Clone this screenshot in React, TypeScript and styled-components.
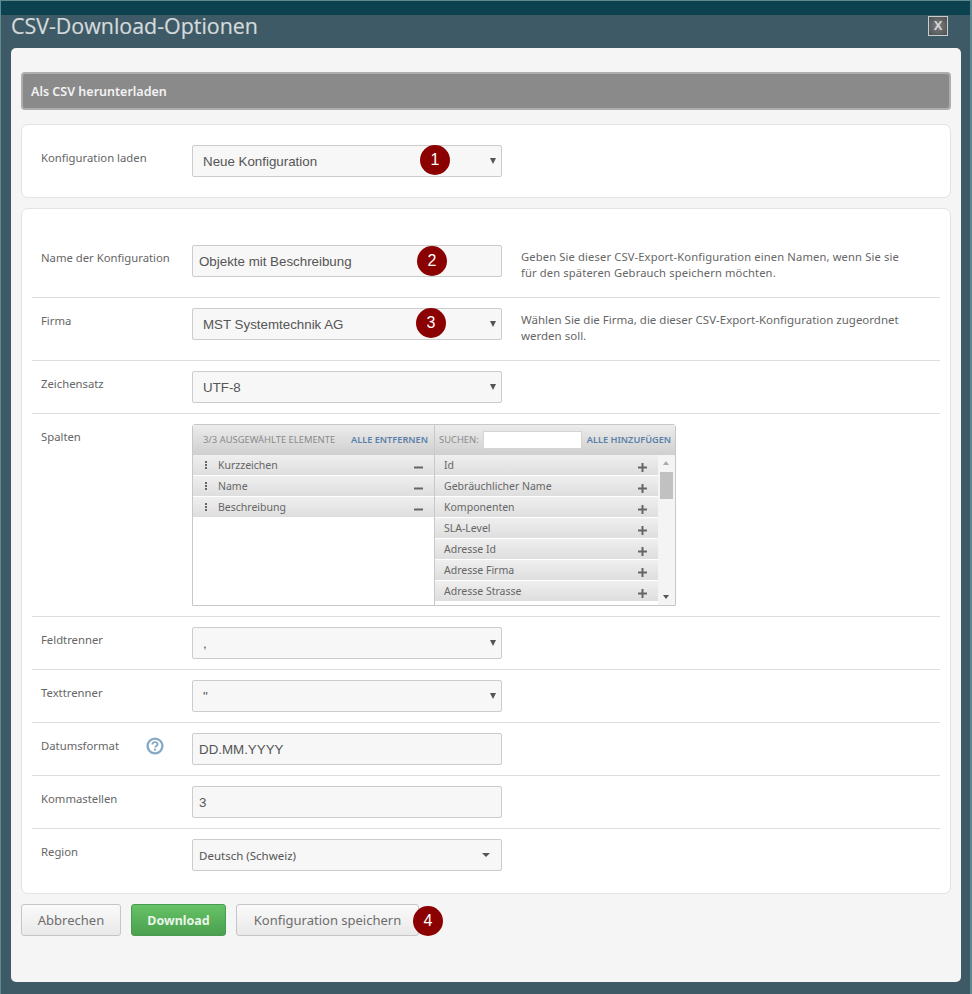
import styled, { createGlobalStyle } from "styled-components";
import { ReactNode } from "react";

const GlobalStyle = createGlobalStyle`
  html, body {
    margin: 0;
    padding: 0;
    background: #3f5a67;
  }
  * {
    box-sizing: border-box;
  }
`;

const Frame = styled.div`
  width: 972px;
  height: 994px;
  overflow: hidden;
  background: #3f5a67;
  border: 1px solid #5f8a90;
  border-bottom: 0;
  border-right-width: 2px;
`;

const TopBand = styled.div`
  height: 14px;
  background: #0c4250;
`;

const Header = styled.div`
  height: 33px;
  padding: 0 22px 0 10px;
  display: flex;
  justify-content: space-between;
  align-items: flex-start;
`;

const Title = styled.h1`
  margin: -1px 0 0;
  font: 400 21.4px/24px "Open Sans", sans-serif;
  color: #d5dadc;
  -webkit-text-stroke: 0.2px #d5dadc;
`;

const CloseButton = styled.button`
  width: 20px;
  height: 20px;
  padding: 0;
  margin-top: 1px;
  border: 1px solid #c8cdd0;
  background: radial-gradient(circle, #7d7d7d 0%, #4b4f52 100%);
  color: #d8d8d8;
  font: 700 13px/18px "Liberation Sans", sans-serif;
`;

const Panel = styled.div`
  width: 950px;
  height: 934px;
  margin-left: 10px;
  padding: 24px 10px 0;
  background: #f5f5f5;
  border-radius: 5px;
  display: flex;
  flex-direction: column;
`;

const Banner = styled.div`
  height: 38px;
  padding: 2px 8px 0;
  display: flex;
  align-items: center;
  background: #8a8a8a;
  border: 2px solid #aeaeae;
  border-radius: 4px;
  color: #f2f2f2;
  font: 600 12.5px/16px "Noto Sans", sans-serif;
`;

const Card = styled.div<{ $top: number }>`
  margin-top: ${(p) => p.$top}px;
  padding: 0 10px;
  background: #fff;
  border: 1px solid #e3e3e3;
  border-radius: 7px;
`;

const Row = styled.div<{ $top?: number; $bottom?: number; $plain?: boolean }>`
  display: flex;
  align-items: flex-start;
  padding: ${(p) => p.$top ?? 10}px 0 ${(p) => p.$bottom ?? 10}px;
  border-bottom: ${(p) => (p.$plain ? "0" : "1px solid #ddd")};
`;

const Label = styled.label`
  flex: 0 0 160px;
  min-width: 0;
  display: flex;
  align-items: center;
  justify-content: space-between;
  padding-left: 9px;
  height: 26px;
  white-space: nowrap;
  color: #666;
  font: 400 11.3px/26px "Noto Sans", sans-serif;
  svg {
    margin-right: 28px;
  }
`;

const Field = styled.div`
  position: relative;
  flex: 0 0 310px;
  height: 32px;
`;

const TextInput = styled.input`
  width: 100%;
  height: 100%;
  padding: 0 6px;
  background: #f7f7f7;
  border: 1px solid #ccc;
  border-radius: 2px;
  color: #555;
  font: 400 13.33px "Liberation Sans", sans-serif;
  outline: none;
`;

const SelectBox = styled.div<{ $small?: boolean }>`
  width: 100%;
  height: 100%;
  padding: 0 ${(p) => (p.$small ? 6 : 10)}px;
  display: flex;
  align-items: center;
  background: #f7f7f7;
  border: 1px solid #ccc;
  border-radius: 2px;
  color: #555;
  font: ${(p) =>
    p.$small
      ? '400 11.5px "Noto Sans", sans-serif'
      : '400 13.33px "Liberation Sans", sans-serif'};
`;

const Caret = styled.span<{ $wide?: boolean }>`
  position: absolute;
  top: 50%;
  right: ${(p) => (p.$wide ? 12 : 6)}px;
  margin-top: ${(p) => (p.$wide ? -2 : -3)}px;
  width: 0;
  height: 0;
  border-style: solid;
  border-color: #555 transparent transparent;
  border-width: ${(p) => (p.$wide ? "4px 4px 0" : "6px 3px 0")};
`;

const Badge = styled.span<{ $left: number; $top: number }>`
  position: absolute;
  left: ${(p) => p.$left}px;
  top: ${(p) => p.$top}px;
  width: 30px;
  height: 30px;
  border-radius: 50%;
  background: #8b0000;
  color: #fff;
  text-align: center;
  font: 400 16px/30px "Liberation Sans", sans-serif;
`;

const Help = styled.p<{ $size: number; $tracking?: number }>`
  margin: 0 0 0 19px;
  width: 385px;
  height: 32px;
  padding-top: 4px;
  color: #666;
  font: 400 ${(p) => p.$size}px/16px "Noto Sans", sans-serif;
  letter-spacing: ${(p) => p.$tracking ?? 0}px;
`;

const Multi = styled.div`
  width: 484px;
  height: 182px;
  display: flex;
  background: #fff;
  border: 1px solid #c8c8c8;
  border-radius: 3px 3px 0 0;
`;

const Column = styled.div<{ $width: number }>`
  position: relative;
  width: ${(p) => p.$width}px;
  height: 100%;
  overflow: hidden;
  & + & {
    border-left: 1px solid #c8c8c8;
  }
`;

const MultiHead = styled.div`
  height: 30px;
  padding: 0 6px 0 10px;
  display: flex;
  align-items: center;
  justify-content: space-between;
  white-space: nowrap;
  background: linear-gradient(#ececec, #cfcfcf);
  font: 400 9.4px/12px "Noto Sans", sans-serif;
  color: #8a8a8a;
  text-transform: uppercase;
`;

const SearchHead = styled(MultiHead)`
  padding: 0 5px 0 4px;
  justify-content: flex-start;
`;

const HeadLink = styled.a`
  color: #5a80a8;
  font-weight: 600;
  font-size: 9.2px;
`;

const SearchInput = styled.input`
  width: 99px;
  height: 18px;
  margin: 0 5px 0 4px;
  border: 1px solid #d4d4d4;
  background: #fff;
`;

const Item = styled.div<{ $inset: number; $width: number }>`
  height: 21px;
  width: ${(p) => p.$width}px;
  padding-left: ${(p) => p.$inset}px;
  position: relative;
  background: linear-gradient(#efefef, #dedede);
  border-bottom: 1px solid #fff;
  color: #666;
  font: 400 10.5px/20px "Noto Sans", sans-serif;
  svg {
    position: absolute;
    top: 8px;
    right: 11px;
  }
`;

const Grip = styled.span`
  position: absolute;
  left: 12px;
  top: 6px;
  width: 2px;
  height: 2px;
  background: #666;
  box-shadow: 0 3px 0 #666, 0 6px 0 #666;
`;

const ScrollTrack = styled.div`
  position: absolute;
  right: 0;
  top: 30px;
  bottom: 0;
  width: 17px;
  background: #f4f4f4;
`;

const ScrollThumb = styled.div`
  position: absolute;
  left: 2px;
  top: 17px;
  width: 13px;
  height: 27px;
  background: #c1c1c1;
`;

const ScrollArrow = styled.span<{ $down?: boolean }>`
  position: absolute;
  left: 5px;
  width: 0;
  height: 0;
  border-style: solid;
  border-color: transparent;
  ${(p) =>
    p.$down
      ? "bottom: 6px; border-width: 4px 3.5px 0; border-top-color: #555;"
      : "top: 6px; border-width: 0 3.5px 4px; border-bottom-color: #aaa;"}
`;

const Actions = styled.div`
  margin-top: 10px;
  display: flex;
  gap: 10px;
  position: relative;
`;

const Button = styled.button<{ $primary?: boolean; $width: number }>`
  width: ${(p) => p.$width}px;
  height: 32px;
  padding: 0;
  border-radius: 3px;
  border: 1px solid ${(p) => (p.$primary ? "#4a9a4f" : "#c6c6c6")};
  background: ${(p) =>
    p.$primary
      ? "linear-gradient(#66c266, #4ba04f)"
      : "linear-gradient(#fafafa, #e9e9e9)"};
  color: ${(p) => (p.$primary ? "#e9f6e9" : "#6d6d6d")};
  font: ${(p) => (p.$primary ? "700 12.5px" : "400 13px")} "Noto Sans", sans-serif;
`;

const HelpIcon = () => (
  <svg width="18" height="18" viewBox="0 0 18 18">
    <circle cx="9" cy="9" r="7.4" fill="#fff" stroke="#86a9c6" strokeWidth="2.4" />
    <path
      d="M6.4 7.4c0-1.5 1.1-2.3 2.6-2.3s2.6.8 2.6 2.1c0 1-.6 1.4-1.3 1.9-.6.4-.9.7-.9 1.3"
      fill="none"
      stroke="#86a9c6"
      strokeWidth="1.9"
    />
    <rect x="8" y="11.6" width="2" height="2" fill="#86a9c6" />
  </svg>
);

const MinusIcon = () => (
  <svg width="9" height="9" viewBox="0 0 9 9">
    <rect x="0" y="3.5" width="9" height="2" fill="#666" />
  </svg>
);

const PlusIcon = () => (
  <svg width="9" height="9" viewBox="0 0 9 9">
    <path d="M3.5 0h2v3.5H9v2H5.5V9h-2V5.5H0v-2h3.5z" fill="#666" />
  </svg>
);

const selected = ["Kurzzeichen", "Name", "Beschreibung"];
const available = [
  "Id",
  "Gebräuchlicher Name",
  "Komponenten",
  "SLA-Level",
  "Adresse Id",
  "Adresse Firma",
  "Adresse Strasse",
];

function Select({ children }: { children: ReactNode }) {
  return (
    <>
      <SelectBox>{children}</SelectBox>
      <Caret />
    </>
  );
}

export default function App() {
  return (
    <>
      <GlobalStyle />
      <Frame>
        <TopBand />
        <Header>
          <Title>CSV-Download-Optionen</Title>
          <CloseButton>X</CloseButton>
        </Header>
        <Panel>
          <Banner>Als CSV herunterladen</Banner>
          <Card $top={14}>
            <Row $top={20} $bottom={20} $plain>
              <Label>Konfiguration laden</Label>
              <Field>
                <Select>Neue Konfiguration</Select>
                <Badge $left={228} $top={0}>1</Badge>
              </Field>
            </Row>
          </Card>
          <Card $top={10}>
            <Row $top={36} $bottom={20}>
              <Label>Name der Konfiguration</Label>
              <Field>
                <TextInput readOnly value="Objekte mit Beschreibung" />
                <Badge $left={225} $top={1}>2</Badge>
              </Field>
              <Help $size={11.2} $tracking={0.13}>
                Geben Sie dieser CSV-Export-Konfiguration einen Namen, wenn Sie sie für den
                späteren Gebrauch speichern möchten.
              </Help>
            </Row>
            <Row $bottom={20}>
              <Label>Firma</Label>
              <Field>
                <Select>MST Systemtechnik AG</Select>
                <Badge $left={224} $top={0}>3</Badge>
              </Field>
              <Help $size={11.5}>
                Wählen Sie die Firma, die dieser CSV-Export-Konfiguration zugeordnet werden
                soll.
              </Help>
            </Row>
            <Row>
              <Label>Zeichensatz</Label>
              <Field>
                <Select>UTF-8</Select>
              </Field>
            </Row>
            <Row>
              <Label>Spalten</Label>
              <Multi>
                <Column $width={241}>
                  <MultiHead>
                    <span>3/3 ausgewählte Elemente</span>
                    <HeadLink>Alle entfernen</HeadLink>
                  </MultiHead>
                  {selected.map((name) => (
                    <Item key={name} $inset={25} $width={241}>
                      <Grip />
                      {name}
                      <MinusIcon />
                    </Item>
                  ))}
                </Column>
                <Column $width={241}>
                  <SearchHead>
                    <span>Suchen:</span>
                    <SearchInput readOnly />
                    <HeadLink>Alle hinzufügen</HeadLink>
                  </SearchHead>
                  {available.map((name) => (
                    <Item key={name} $inset={9} $width={223}>
                      {name}
                      <PlusIcon />
                    </Item>
                  ))}
                  <ScrollTrack>
                    <ScrollArrow />
                    <ScrollThumb />
                    <ScrollArrow $down />
                  </ScrollTrack>
                </Column>
              </Multi>
            </Row>
            <Row>
              <Label>Feldtrenner</Label>
              <Field>
                <Select>,</Select>
              </Field>
            </Row>
            <Row>
              <Label>Texttrenner</Label>
              <Field>
                <Select>"</Select>
              </Field>
            </Row>
            <Row>
              <Label>
                Datumsformat
                <HelpIcon />
              </Label>
              <Field>
                <TextInput readOnly value="DD.MM.YYYY" />
              </Field>
            </Row>
            <Row>
              <Label>Kommastellen</Label>
              <Field>
                <TextInput readOnly value="3" />
              </Field>
            </Row>
            <Row $bottom={22} $plain>
              <Label>Region</Label>
              <Field>
                <SelectBox $small>Deutsch (Schweiz)</SelectBox>
                <Caret $wide />
              </Field>
            </Row>
          </Card>
          <Actions>
            <Button $width={100}>Abbrechen</Button>
            <Button $primary $width={95}>Download</Button>
            <Button $width={183}>Konfiguration speichern</Button>
            <Badge $left={392} $top={2}>4</Badge>
          </Actions>
        </Panel>
      </Frame>
    </>
  );
}
